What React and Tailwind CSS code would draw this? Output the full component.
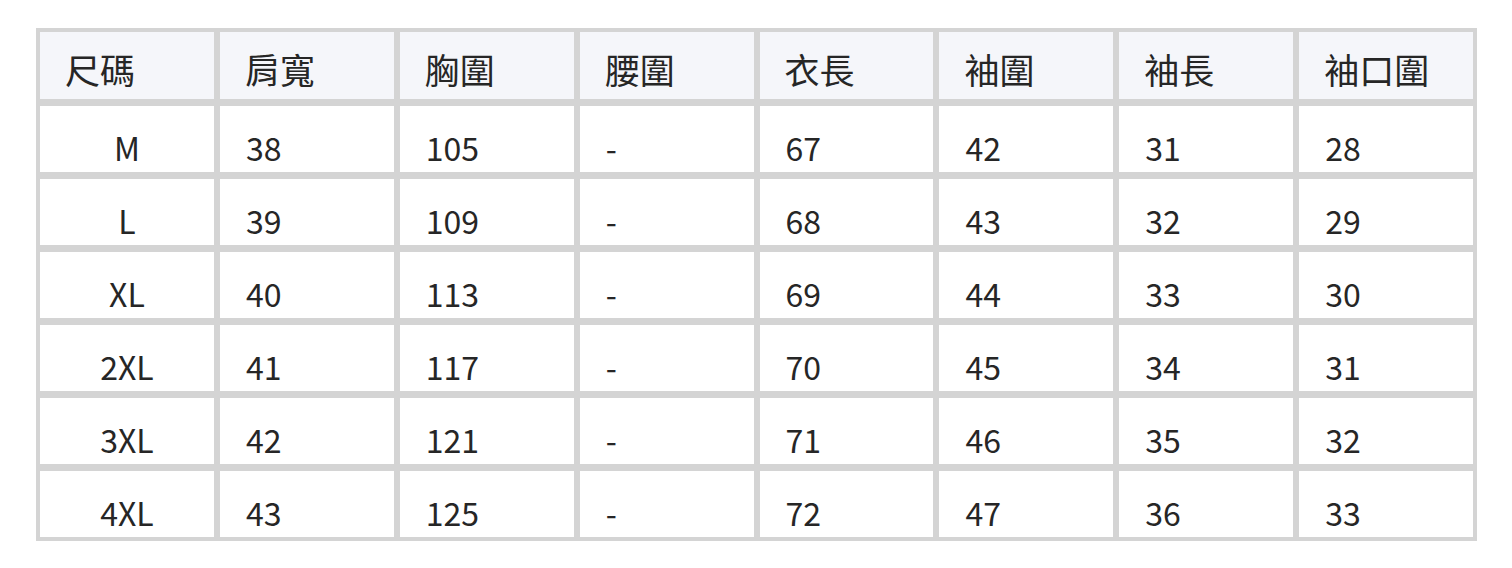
import React from 'react'

const headers = ['尺碼', '肩寬', '胸圍', '腰圍', '衣長', '袖圍', '袖長', '袖口圍']

const rows = [
  ['M', '38', '105', '-', '67', '42', '31', '28'],
  ['L', '39', '109', '-', '68', '43', '32', '29'],
  ['XL', '40', '113', '-', '69', '44', '33', '30'],
  ['2XL', '41', '117', '-', '70', '45', '34', '31'],
  ['3XL', '42', '121', '-', '71', '46', '35', '32'],
  ['4XL', '43', '125', '-', '72', '47', '36', '33'],
]

export default function App() {
  return (
    <div
      className="min-h-[568px] w-[1512px] bg-white pl-[36px] pt-[28px]"
      style={{ fontFamily: '"Noto Sans CJK TC", "Noto Sans", sans-serif' }}
    >
      {/* size chart */}
      <div className="grid w-[1441px] grid-cols-8 gap-x-[6px] gap-y-[7px] bg-[#d4d4d4] p-[4px] text-[#262626]">
        {headers.map(h => (
          <div
            key={h}
            className="flex h-[67px] items-end bg-[#f5f6fa] pb-[13px] pl-[25px] text-[35px] leading-[35px]"
          >
            {h}
          </div>
        ))}
        {rows.map(r =>
          r.map((v, i) => (
            <div
              key={r[0] + i}
              className={
                'flex h-[66px] items-end bg-white pb-[9px] text-[32px] leading-[32px] ' +
                (i === 0 ? 'justify-center' : 'pl-[26px]')
              }
            >
              {v}
            </div>
          ))
        )}
      </div>
    </div>
  )
}
